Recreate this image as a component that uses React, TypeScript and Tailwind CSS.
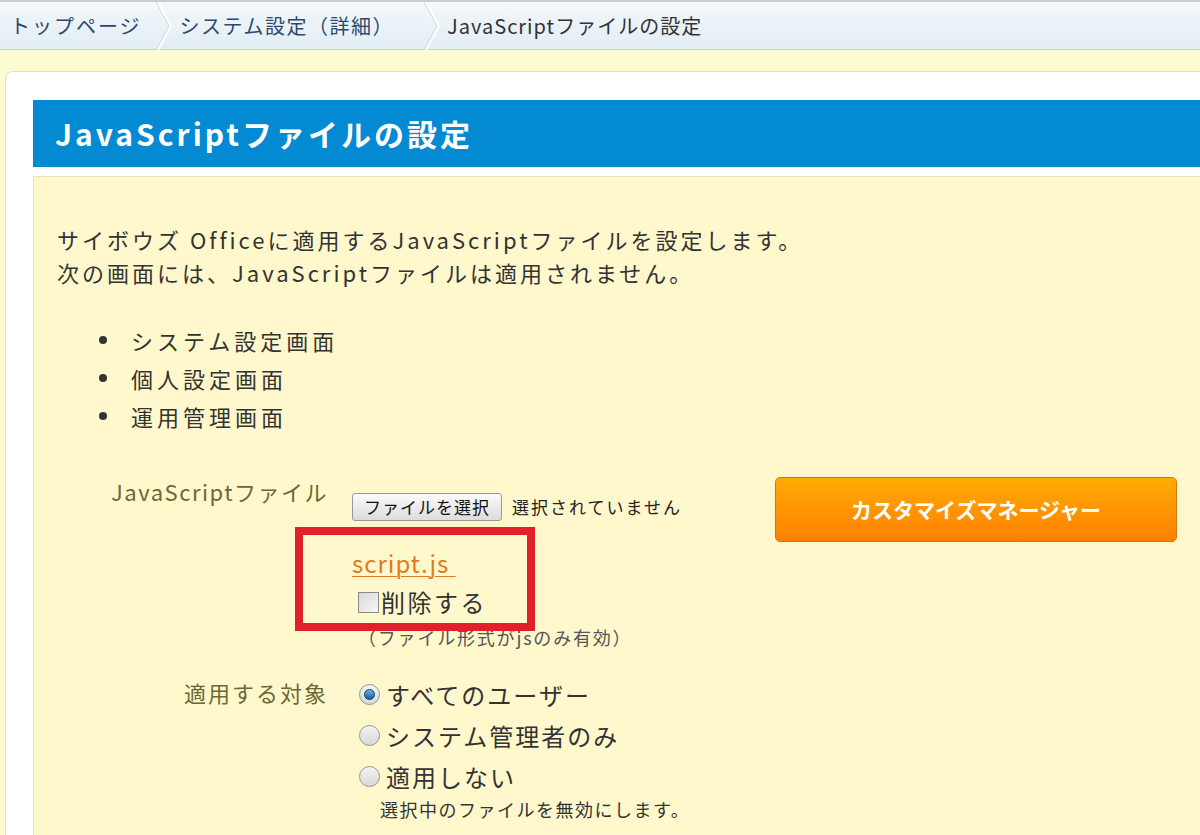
const FONT = '"Noto Sans CJK JP", "Noto Sans", sans-serif'

function Chevron() {
  return (
    <svg width="22" height="48" viewBox="0 0 22 48" className="shrink-0">
      <polyline points="4,0 17,24 4,48" fill="none" stroke="#ffffff" strokeWidth="2" />
      <polyline points="2,0 15,24 2,48" fill="none" stroke="#cfdbe4" strokeWidth="1" />
    </svg>
  )
}

function Radio({ checked }: { checked?: boolean }) {
  return (
    <span className="relative inline-flex h-[21px] w-[21px] shrink-0 items-center justify-center rounded-full border border-[#8e959c] bg-gradient-to-b from-[#f4f4f4] to-[#d8d8d8]">
      {checked && (
        <span className="h-[11px] w-[11px] rounded-full border border-[#0c3f66] bg-gradient-to-b from-[#6fb4e6] to-[#0f5f9c]" />
      )}
    </span>
  )
}

export default function App() {
  return (
    <div className="h-[835px] w-[1200px] overflow-hidden bg-[#fdfbd2] text-[#333]" style={{ fontFamily: FONT }}>
      {/* breadcrumb */}
      <div className="flex h-[50px] items-center border-t-2 border-b border-t-[#c9cdd1] border-b-[#c5d2db] bg-gradient-to-b from-[#f3f8fb] to-[#e2edf4] text-[20px]">
        <span className="pl-[10px] pr-[12px] tracking-[2px] text-[#2b4a70]">トップページ</span>
        <Chevron />
        <span className="pl-[4px] pr-[28px] tracking-[1.5px] text-[#2b4a70]">システム設定（詳細）</span>
        <Chevron />
        <span className="pl-[3px] tracking-[1px] text-[#333]">JavaScriptファイルの設定</span>
      </div>

      <div className="pl-[5px] pt-[21px]">
        <div className="rounded-tl-[8px] border border-r-0 border-[#e4e0c4] bg-white pl-[27px] pt-[28px]">
          <div className="flex h-[67px] items-center bg-[#0489d3] pl-[22px] text-[30px] font-bold tracking-[3px] text-white">
            JavaScriptファイルの設定
          </div>
          <div className="mt-[9px] h-[700px] border border-r-0 border-[#efe4ae] bg-[#fef8cc] pl-[23px] pt-[46px]">
            <p className="text-[22px] leading-[33px] tracking-[3px]">サイボウズ Officeに適用するJavaScriptファイルを設定します。</p>
            <p className="text-[22px] leading-[33px] tracking-[3px]">次の画面には、JavaScriptファイルは適用されません。</p>

            <ul className="mt-[32px] text-[22px] leading-[38px] tracking-[4px]">
              {['システム設定画面', '個人設定画面', '運用管理画面'].map((t) => (
                <li key={t} className="flex items-center">
                  <span className="ml-[42px] mr-[24px] h-[8px] w-[8px] rounded-full bg-[#333]" />
                  {t}
                </li>
              ))}
            </ul>

            {/* file row */}
            <div className="relative mt-[42px] flex">
              <div className="w-[271px] text-right text-[22px] leading-[28px] tracking-[1.5px] text-[#6b6836]">JavaScriptファイル</div>
              <div className="ml-[24px] w-[423px]">
                <div className="mt-[16px] flex items-center">
                  <span className="flex h-[28px] w-[150px] items-center justify-center rounded-[3px] border border-[#9a9a9a] bg-gradient-to-b from-[#fbfbfb] to-[#dcdcdc] text-[17px] tracking-[1px] text-[#111]">
                    ファイルを選択
                  </span>
                  <span className="ml-[10px] text-[17px] tracking-[2px] text-[#222]">選択されていません</span>
                </div>
                <div className="mt-[27px] text-[24px] leading-[30px] tracking-[1px]">
                  <span className="text-[#e2791f] underline decoration-1 underline-offset-[3px]">script.js&nbsp;</span>
                </div>
                <div className="mt-[8px] flex items-center text-[24px] leading-[32px] tracking-[2.5px]">
                  <span className="ml-[6px] mr-[2px] h-[21px] w-[21px] border border-[#8a8a8a] bg-gradient-to-br from-[#d8d8d8] to-[#f8f8f8]" />
                  削除する
                </div>
                <div className="mt-[7px] pl-[6px] text-[18px] leading-[24px] tracking-[1.8px] text-[#555]">（ファイル形式がjsのみ有効）</div>
              </div>
              <div className="w-[402px]">
                <span className="flex h-[65px] w-[402px] items-center justify-center rounded-[5px] border border-[#d9780a] bg-gradient-to-b from-[#ffab05] to-[#ff7f00] text-[21px] font-bold text-white">
                  カスタマイズマネージャー
                </span>
              </div>
              {/* annotation box */}
              <div className="absolute left-[238px] top-[50px] h-[104px] w-[240px] border-[8px] border-[#e0202b]" />
            </div>

            {/* target row */}
            <div className="mt-[29px] flex">
              <div className="w-[271px] text-right text-[22px] leading-[28px] tracking-[2px] text-[#6b6836]">適用する対象</div>
              <div className="ml-[31px] mt-[-4px]">
                {[
                  ['すべてのユーザー', true],
                  ['システム管理者のみ', false],
                  ['適用しない', false],
                ].map(([t, c]) => (
                  <div key={t as string} className="flex h-[41px] items-center text-[24px] tracking-[2px]">
                    <Radio checked={c as boolean} />
                    <span className="ml-[6px]">{t as string}</span>
                  </div>
                ))}
                <div className="ml-[21px] text-[18px] leading-[24px] tracking-[1.5px] text-[#333]">選択中のファイルを無効にします。</div>
              </div>
            </div>
          </div>
        </div>
      </div>
    </div>
  )
}
